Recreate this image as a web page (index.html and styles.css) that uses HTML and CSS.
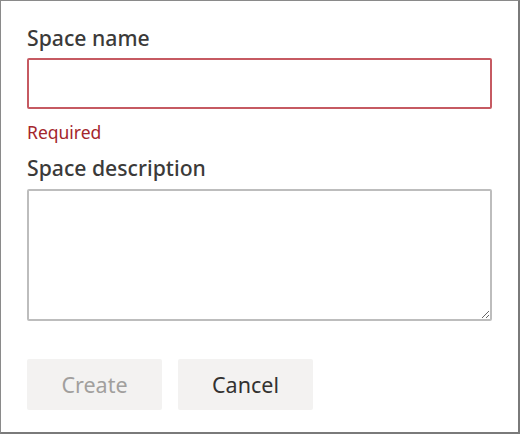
FILE: index.html
```html
<!DOCTYPE html>
<html>
<head>
<meta charset="utf-8">
<link rel="stylesheet" href="styles.css">
</head>
<body>
<div class="frame">
  <form class="form">
    <label class="label" for="name">Space name</label>
    <input id="name" class="input error" type="text">
    <div class="error-msg">Required</div>
    <label class="label desc" for="desc">Space description</label>
    <textarea id="desc" class="textarea"></textarea>
    <div class="actions">
      <button type="button" class="btn disabled">Create</button>
      <button type="button" class="btn">Cancel</button>
    </div>
  </form>
</div>
</body>
</html>
```
FILE: styles.css
```css
html, body {
  margin: 0;
  padding: 0;
  background: #ffffff;
}
.frame {
  box-sizing: border-box;
  width: 520px;
  height: 434px;
  border-left: 1px solid #8a8a8a;
  border-top: 1px solid #8a8a8a;
  border-right: 2px solid #7a7a7a;
  border-bottom: 2px solid #7a7a7a;
  font-family: "Noto Sans", "Open Sans", sans-serif;
}
.form {
  display: flex;
  flex-direction: column;
  align-items: flex-start;
  padding: 23px 0 0 26px;
}
.label {
  font-size: 21.2px;
  font-weight: 500;
  line-height: 28px;
  color: #3b3a39;
  margin-bottom: 6px;
}
.label.desc {
  margin-top: 11px;
  margin-bottom: 7px;
}
.input, .textarea {
  box-sizing: border-box;
  width: 465px;
  border-radius: 2px;
  margin: 0;
  background: #fff;
  outline: none;
  font-family: inherit;
}
.input {
  height: 51px;
  border: 2px solid #c65a62;
}
.error-msg {
  color: #a4262c;
  font-size: 17.5px;
  line-height: 22px;
  margin-top: 12px;
}
.textarea {
  height: 132px;
  border: 2px solid #bdbdbd;
  resize: vertical;
}
.actions {
  display: flex;
  gap: 16px;
  margin-top: 38px;
}
.btn {
  box-sizing: border-box;
  width: 135px;
  height: 51px;
  border: none;
  border-radius: 2px;
  background: #f3f2f1;
  color: #323130;
  font-family: inherit;
  font-size: 21.5px;
  font-weight: 400;
  padding: 0;
}
.btn.disabled {
  color: #a19f9d;
}
```
